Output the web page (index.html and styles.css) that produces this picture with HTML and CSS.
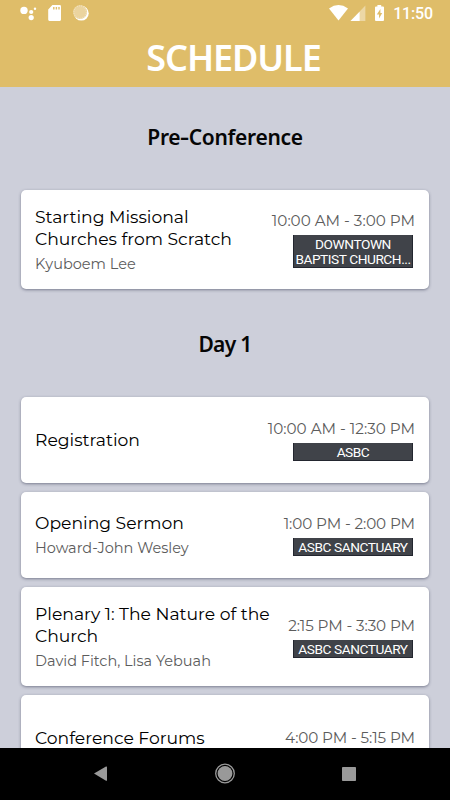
FILE: index.html
```html
<!DOCTYPE html>
<html lang="en">
<head>
<meta charset="utf-8">
<title>Schedule</title>
<link rel="stylesheet" href="styles.css">
</head>
<body>
<div class="screen">
  <header class="header">
    <div class="status">
      <svg class="status-left" width="72" height="20" viewBox="0 0 72 20" fill="#fff">
        <circle cx="6" cy="6.4" r="3.7"/><circle cx="13.2" cy="8" r="2.1"/><circle cx="17" cy="4.8" r="1.2"/><circle cx="13.2" cy="13.6" r="2.6"/>
        <path fill-rule="evenodd" d="M34.4 1H41.8Q43 1 43 2.4V15.6Q43 17 41.8 17H31.4Q30.2 17 30.2 15.6V5.6ZM35.1 3V5.6H36.5V3ZM37.7 3V5.6H39.1V3ZM40.3 3V5.6H41.7V3Z"/>
        <circle cx="63.3" cy="9.2" r="7.4"/>
        <circle cx="62.1" cy="8.1" r="7" fill="#ebd49f"/>
        <circle cx="62.1" cy="8.1" r="6.2" fill="none" stroke="#f5e8c8" stroke-width="1" stroke-dasharray="1 1.1"/>
      </svg>
      <div class="status-right">
        <svg width="58" height="20" viewBox="0 0 58 20" fill="#fff">
          <path d="M0 4.4Q9.5-2.4 19 4.4L9.5 16.6Z"/>
          <path d="M36.4 1.6V17H21.5Z" opacity=".4"/><path d="M30.6 7.8V17H21.5Z"/>
          <path fill-rule="evenodd" d="M48.4 1H52.2V2.6H54Q55 2.6 55 3.6V16Q55 17 54 17H47Q46 17 46 16V3.6Q46 2.6 47 2.6H48.4ZM51.4 5L47.8 10.6H50V14.6L53.2 9H51.4Z"/>
        </svg>
        <span class="clock">11:50</span>
      </div>
    </div>
    <h1>SCHEDULE</h1>
  </header>
  <main class="list">
    <h2>Pre<span class="dash">-</span>Conference</h2>
    <article class="card tall">
      <div class="info"><h3>Starting Missional<br>Churches from Scratch</h3><p>Kyuboem Lee</p></div>
      <div class="meta"><time>10:00 AM - 3:00 PM</time><div class="room">DOWNTOWN<br>BAPTIST CHURCH...</div></div>
    </article>
    <h2 class="day">Day 1</h2>
    <article class="card">
      <div class="info"><h3>Registration</h3></div>
      <div class="meta"><time>10:00 AM - 12:30 PM</time><div class="room">ASBC</div></div>
    </article>
    <article class="card">
      <div class="info"><h3>Opening Sermon</h3><p>Howard-John Wesley</p></div>
      <div class="meta"><time class="narrow">1:00 PM - 2:00 PM</time><div class="room">ASBC SANCTUARY</div></div>
    </article>
    <article class="card tall">
      <div class="info"><h3>Plenary 1: The Nature of the<br>Church</h3><p>David Fitch, Lisa Yebuah</p></div>
      <div class="meta"><time class="narrow">2:15 PM - 3:30 PM</time><div class="room">ASBC SANCTUARY</div></div>
    </article>
    <article class="card tail">
      <div class="info"><h3>Conference Forums</h3></div>
      <div class="meta"><time class="narrow">4:00 PM - 5:15 PM</time></div>
    </article>
  </main>
  <nav class="nav">
    <svg width="450" height="52" viewBox="0 0 450 52" fill="#999">
      <path d="M94 25.6L106 18.6Q107 18.2 107 19.2V32.2Q107 33.2 106 32.7Z"/>
      <circle cx="225" cy="25.5" r="9.3" fill="none" stroke="#999" stroke-width="1.3"/><circle cx="225" cy="25.5" r="7.4"/>
      <rect x="342" y="19" width="14" height="14" rx=".8"/>
    </svg>
  </nav>
</div>
</body>
</html>
```
FILE: styles.css
```css
* { box-sizing: border-box; margin: 0; padding: 0; }
body { background: #cdcfda; }
.screen { width: 450px; height: 800px; display: flex; flex-direction: column; overflow: hidden; font-family: Montserrat, Inter, sans-serif; }
.header { height: 87px; flex: none; background: #dfbd69; color: #fff; }
.status { height: 36px; display: flex; justify-content: space-between; padding: 4px 17px 0 18px; }
.status svg { display: block; }
.status-right { display: flex; }
.clock { font: 500 16px/20px Roboto, sans-serif; letter-spacing: -.15px; margin-left: 6px; }
h1 { font: 650 36px/44px "Noto Sans", sans-serif; letter-spacing: -1.1px; text-align: center; padding-left: 17px; }
.list { flex: 1; min-height: 0; overflow: hidden; padding: 0 21px; }
h2 { height: 103px; font: 600 21px/101px "Noto Sans", sans-serif; letter-spacing: -.3px; text-align: center; color: #060606; }
.dash { display: inline-block; transform: scaleX(1.35); margin: 0 1px; }
.day { height: 99px; line-height: 92px; letter-spacing: -.7px; }
.card { display: flex; justify-content: space-between; align-items: center; height: 86px; margin-bottom: 9px; padding: 0 14px; background: #fff; border-radius: 5px; box-shadow: 0 1px 3px rgba(40, 44, 70, .5); }
.tall { height: 99px; }
.info, .meta { white-space: nowrap; }
h3 { font-weight: 400; font-size: 17.2px; line-height: 22px; color: #000; }
.info p { font-size: 14.5px; line-height: 20px; color: #5c5c5c; margin-top: 4px; }
.meta { display: flex; flex-direction: column; align-items: flex-end; }
time { font-size: 15.2px; line-height: 20px; color: #5c5c5c; }
.narrow { letter-spacing: -.1px; }
.tail time { margin-top: -1px; }
.room { width: 120px; margin: 4px 2px 0 0; padding: 2px 0 0; background: #404349; border: 1px solid #23262f; border-width: 0 1px 1px; color: #fff; text-align: center; font: 400 13.7px/15px Roboto, sans-serif; letter-spacing: -.45px; }
.nav { height: 52px; flex: none; background: #000; }
.nav svg { display: block; }
```
